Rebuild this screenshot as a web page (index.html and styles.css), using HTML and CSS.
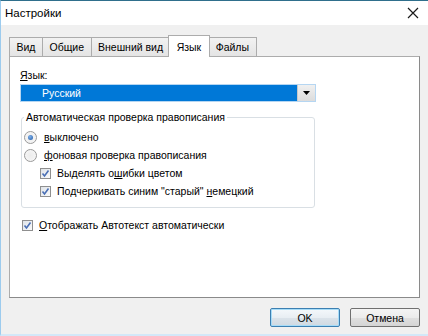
FILE: index.html
```html
<!DOCTYPE html>
<html lang="ru">
<head>
  <meta charset="UTF-8">
  <title>Настройки</title>
  <link rel="stylesheet" href="styles.css">
</head>
<body>
  <div class="window">
    <div class="titlebar">
      <span class="title">Настройки</span>
      <svg class="close" width="12" height="12" viewBox="0 0 12 12">
        <path d="M1 1 L11 11 M11 1 L1 11" stroke="#1a1a1a" stroke-width="1.2" fill="none"/>
      </svg>
    </div>

    <div class="client">
      <div class="tabs">
        <div class="tab">Вид</div>
        <div class="tab">Общие</div>
        <div class="tab">Внешний вид</div>
        <div class="tab active">Язык</div>
        <div class="tab">Файлы</div>
      </div>

      <div class="panel">
        <div class="field-label"><u>Я</u>зык:</div>
        <div class="select">
          <span class="select-value">Русский</span>
          <span class="select-btn">
            <svg width="7" height="4" viewBox="0 0 7 4"><path d="M0 0 H7 L3.5 4 Z" fill="#000"/></svg>
          </span>
        </div>

        <fieldset class="group">
          <legend>Автоматическая проверка правописания</legend>
          <div class="row">
            <span class="radio checked"></span>
            <span><u>в</u>ыключено</span>
          </div>
          <div class="row">
            <span class="radio"></span>
            <span><u>ф</u>оновая проверка правописания</span>
          </div>
          <div class="row sub">
            <span class="check"><svg width="9" height="9" viewBox="0 0 9 9"><path d="M1.5 4.5 L3.5 7 L7.5 1.5" stroke="#4a6fb5" stroke-width="1.6" fill="none"/></svg></span>
            <span>Выделять о<u>ш</u>ибки цветом</span>
          </div>
          <div class="row sub">
            <span class="check"><svg width="9" height="9" viewBox="0 0 9 9"><path d="M1.5 4.5 L3.5 7 L7.5 1.5" stroke="#4a6fb5" stroke-width="1.6" fill="none"/></svg></span>
            <span>Подчеркивать синим "старый" <u>н</u>емецкий</span>
          </div>
        </fieldset>

        <div class="row outer">
          <span class="check"><svg width="9" height="9" viewBox="0 0 9 9"><path d="M1.5 4.5 L3.5 7 L7.5 1.5" stroke="#4a6fb5" stroke-width="1.6" fill="none"/></svg></span>
          <span><u>О</u>тображать Автотекст автоматически</span>
        </div>
      </div>

      <div class="buttons">
        <button class="btn default">OK</button>
        <button class="btn">Отмена</button>
      </div>
    </div>
  </div>
</body>
</html>
```

FILE: styles.css
```css
* {
  box-sizing: border-box;
}

body {
  margin: 0;
  font-family: 'Liberation Sans', Arial, sans-serif;
  font-size: 10.5px;
  color: #000;
  background: #f0f0f0;
}

.window {
  width: 428px;
  height: 336px;
  display: flex;
  flex-direction: column;
  border-top: 1px solid #2f6f8c;
  border-left: 1px solid #9ccbee;
  border-bottom: 2px solid #d3e8f8;
  background: #f0f0f0;
}

.titlebar {
  height: 24px;
  background: #fff;
  display: flex;
  align-items: center;
  justify-content: space-between;
  padding: 0 9px 0 4px;
}

.title {
  font-size: 11.5px;
  color: #000;
}

.client {
  flex: 1;
  padding: 10px 0 0 8px;
}

/* tabs */
.tabs {
  display: flex;
  height: 21px;
  align-items: flex-start;
}

.tab {
  height: 19px;
  margin-top: 2px;
  margin-right: -1px;
  padding: 0 6.5px;
  line-height: 18px;
  border: 1px solid #acacac;
  border-bottom: none;
  background: linear-gradient(#f2f2f2, #e4e4e4);
}

.tab.active {
  position: relative;
  z-index: 1;
  height: 22px;
  margin-top: 0;
  margin-left: -2px;
  margin-right: -2px;
  padding: 0 8px;
  line-height: 22px;
  background: #fff;
}

.panel {
  width: 411px;
  height: 242px;
  background: #fff;
  border: 1px solid #acacac;
  border-right-color: #8a8a8a;
  border-bottom-color: #8a8a8a;
  padding: 12px 0 0 10px;
}

.field-label {
  line-height: 13px;
}

.select {
  display: flex;
  width: 296px;
  height: 18px;
  margin-top: 2px;
  border: 1px solid #b5d6f2;
}

.select-value {
  flex: 1;
  background: #0078d7;
  color: #fff;
  line-height: 16px;
  padding-left: 21px;
}

.select-btn {
  width: 18px;
  display: flex;
  align-items: center;
  justify-content: center;
  background: linear-gradient(#f0f0f0, #dcdcdc);
  border-left: 1px solid #c8c8c8;
}

/* group box */
.group {
  width: 294px;
  margin: 9px 0 0 1px;
  padding: 4px 0 7px 2px;
  border: 1px solid #d9dfe4;
  border-radius: 3px;
}

.group legend {
  padding: 0 2px;
  line-height: 13px;
}

.row {
  display: flex;
  align-items: center;
  height: 18px;
  gap: 7px;
}

.row.sub {
  padding-left: 16px;
  gap: 6px;
}

.row.outer {
  margin-top: 8px;
  padding-left: 2px;
  gap: 6px;
}

.radio {
  width: 13px;
  height: 13px;
  border-radius: 50%;
  border: 1px solid #9a9a9a;
  background: radial-gradient(circle, #ececec, #f8f8f8);
  display: flex;
  align-items: center;
  justify-content: center;
}

.radio.checked::after {
  content: "";
  width: 5px;
  height: 5px;
  border-radius: 50%;
  background: radial-gradient(circle at 40% 35%, #7fb0e8, #1f5aa8);
}

.check {
  width: 11px;
  height: 11px;
  border: 1px solid #8f8f8f;
  background: linear-gradient(135deg, #dfe3e8, #fafafa);
  display: flex;
  align-items: center;
  justify-content: center;
}

/* dialog buttons */
.buttons {
  display: flex;
  justify-content: flex-end;
  gap: 10px;
  padding: 10px 8px 0 0;
}

.btn {
  width: 70px;
  height: 19px;
  font-family: inherit;
  font-size: 10.5px;
  color: #000;
  padding: 0;
  border: 1px solid #707070;
  border-radius: 2px;
  background: linear-gradient(#f4f4f4 0%, #ececec 50%, #e0e0e0 51%, #d4d4d4 100%);
}

.btn.default {
  border-color: #3c7fb1;
  box-shadow: inset 0 0 0 1px #a6dcf8;
  background: linear-gradient(#f4f8fb 0%, #e8eef3 50%, #dbe3ea 51%, #d0d9e1 100%);
}
```
